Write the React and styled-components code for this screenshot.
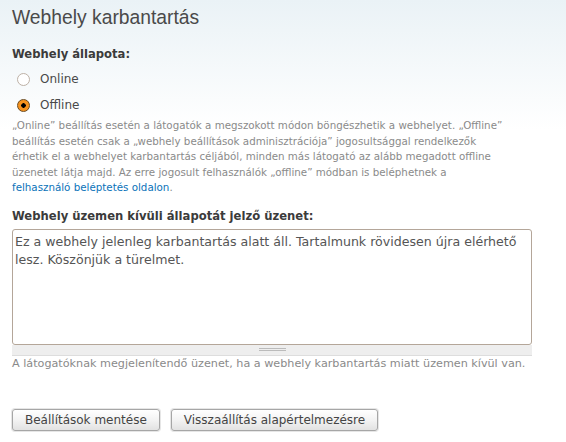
import React from "react";
import styled, { createGlobalStyle } from "styled-components";

const Global = createGlobalStyle`
  html, body { margin: 0; padding: 0; }
  body {
    background: linear-gradient(to bottom, #eaf2f6 0px, #ffffff 130px) no-repeat #fff;
    font-family: "DejaVu Sans", Verdana, sans-serif;
    color: #494949;
    min-height: 442px;
  }
`;

const Page = styled.div`
  padding: 6px 12px 0 12px;
  display: flex;
  flex-direction: column;
`;

const Title = styled.h1`
  margin: 0;
  font-family: "Liberation Sans", Arial, sans-serif;
  font-weight: normal;
  font-size: 19.3px;
  line-height: 24px;
  color: #4a4a4a;
`;

const Label = styled.div`
  font-weight: bold;
  font-size: 11.6px;
  line-height: 16px;
  color: #3b3b3b;
  margin-top: ${(p) => p.$mt}px;
`;

const Radios = styled.div`
  display: flex;
  flex-direction: column;
  gap: 8px;
  margin-top: 8px;
  padding-left: 5px;
`;

const RadioRow = styled.label`
  display: flex;
  align-items: center;
  gap: 10px;
  font-size: 12px;
  line-height: 18px;
  color: #494949;
`;

const Dot = styled.span`
  box-sizing: border-box;
  width: 13px;
  height: 13px;
  border-radius: 50%;
  border: 1px solid ${(p) => (p.$on ? "#6b4a1e" : "#bdb1a6")};
  background: ${(p) =>
    p.$on ? "radial-gradient(circle, #000 0 2px, #f7931e 2.5px)" : "#fff"};
`;

const Help = styled.div`
  width: ${(p) => p.$w || 522}px;
  font-size: ${(p) => p.$fs || 11}px;
  line-height: ${(p) => p.$lh || 16}px;
  color: #8a8a8a;
  margin-top: ${(p) => p.$mt || 0}px;
`;

const Link = styled.a`
  color: #0a72b9;
  text-decoration: none;
  white-space: nowrap;
`;

const AreaWrap = styled.div`
  width: 520px;
  margin-top: 5px;
  display: flex;
  flex-direction: column;
`;

const Area = styled.div`
  box-sizing: border-box;
  height: 116px;
  border: 1px solid #b4a699;
  border-radius: 3px;
  background: #fff;
  padding: 3px 2px;
  font-size: 12.6px;
  line-height: 18px;
  color: #555;
`;

const Grip = styled.div`
  height: 10px;
  background: #eeeeee;
  border-bottom: 1px solid #dddddd;
  display: flex;
  justify-content: center;
  align-items: center;
  &::after {
    content: "";
    width: 27px;
    height: 3px;
    border-top: 1px solid #bbb;
    border-bottom: 1px solid #bbb;
    box-sizing: border-box;
  }
`;

const Buttons = styled.div`
  display: flex;
  gap: 11px;
  margin-top: 37px;
`;

const Button = styled.button`
  font-family: "DejaVu Sans", Verdana, sans-serif;
  font-size: 12px;
  color: #444;
  height: 22px;
  padding: 0 12px;
  border: 1px solid #a6a6a6;
  border-radius: 3px;
  box-shadow: 0 0 0 1px #e6e6e6;
  background: linear-gradient(to bottom, #ffffff 0%, #f3f3f3 50%, #e2e2e2 100%);
`;

export default function App() {
  return (
    <>
      <Global />
      <Page>
        <Title>Webhely karbantartás</Title>
        <Label $mt={16}>Webhely állapota:</Label>
        <Radios>
          <RadioRow>
            <Dot />
            Online
          </RadioRow>
          <RadioRow>
            <Dot $on />
            Offline
          </RadioRow>
        </Radios>
        <Help $mt={4} $lh={15.5} $fs={10.3} $w={503}>
          „Online” beállítás esetén a látogatók a megszokott módon böngészhetik a webhelyet. „Offline”
          beállítás esetén csak a „webhely beállítások adminisztrációja” jogosultsággal rendelkezők
          érhetik el a webhelyet karbantartás céljából, minden más látogató az alább megadott offline
          üzenetet látja majd. Az erre jogosult felhasználók „offline” módban is beléphetnek a{" "}
          <Link href="#">felhasználó beléptetés oldalon</Link>.
        </Help>
        <Label $mt={12}>Webhely üzemen kívüli állapotát jelző üzenet:</Label>
        <AreaWrap>
          <Area>
            Ez a webhely jelenleg karbantartás alatt áll. Tartalmunk rövidesen újra elérhető lesz.
            Köszönjük a türelmet.
          </Area>
          <Grip />
        </AreaWrap>
        <Help $fs={11.2}>A látogatóknak megjelenítendő üzenet, ha a webhely karbantartás miatt üzemen kívül van.</Help>
        <Buttons>
          <Button>Beállítások mentése</Button>
          <Button>Visszaállítás alapértelmezésre</Button>
        </Buttons>
      </Page>
    </>
  );
}
